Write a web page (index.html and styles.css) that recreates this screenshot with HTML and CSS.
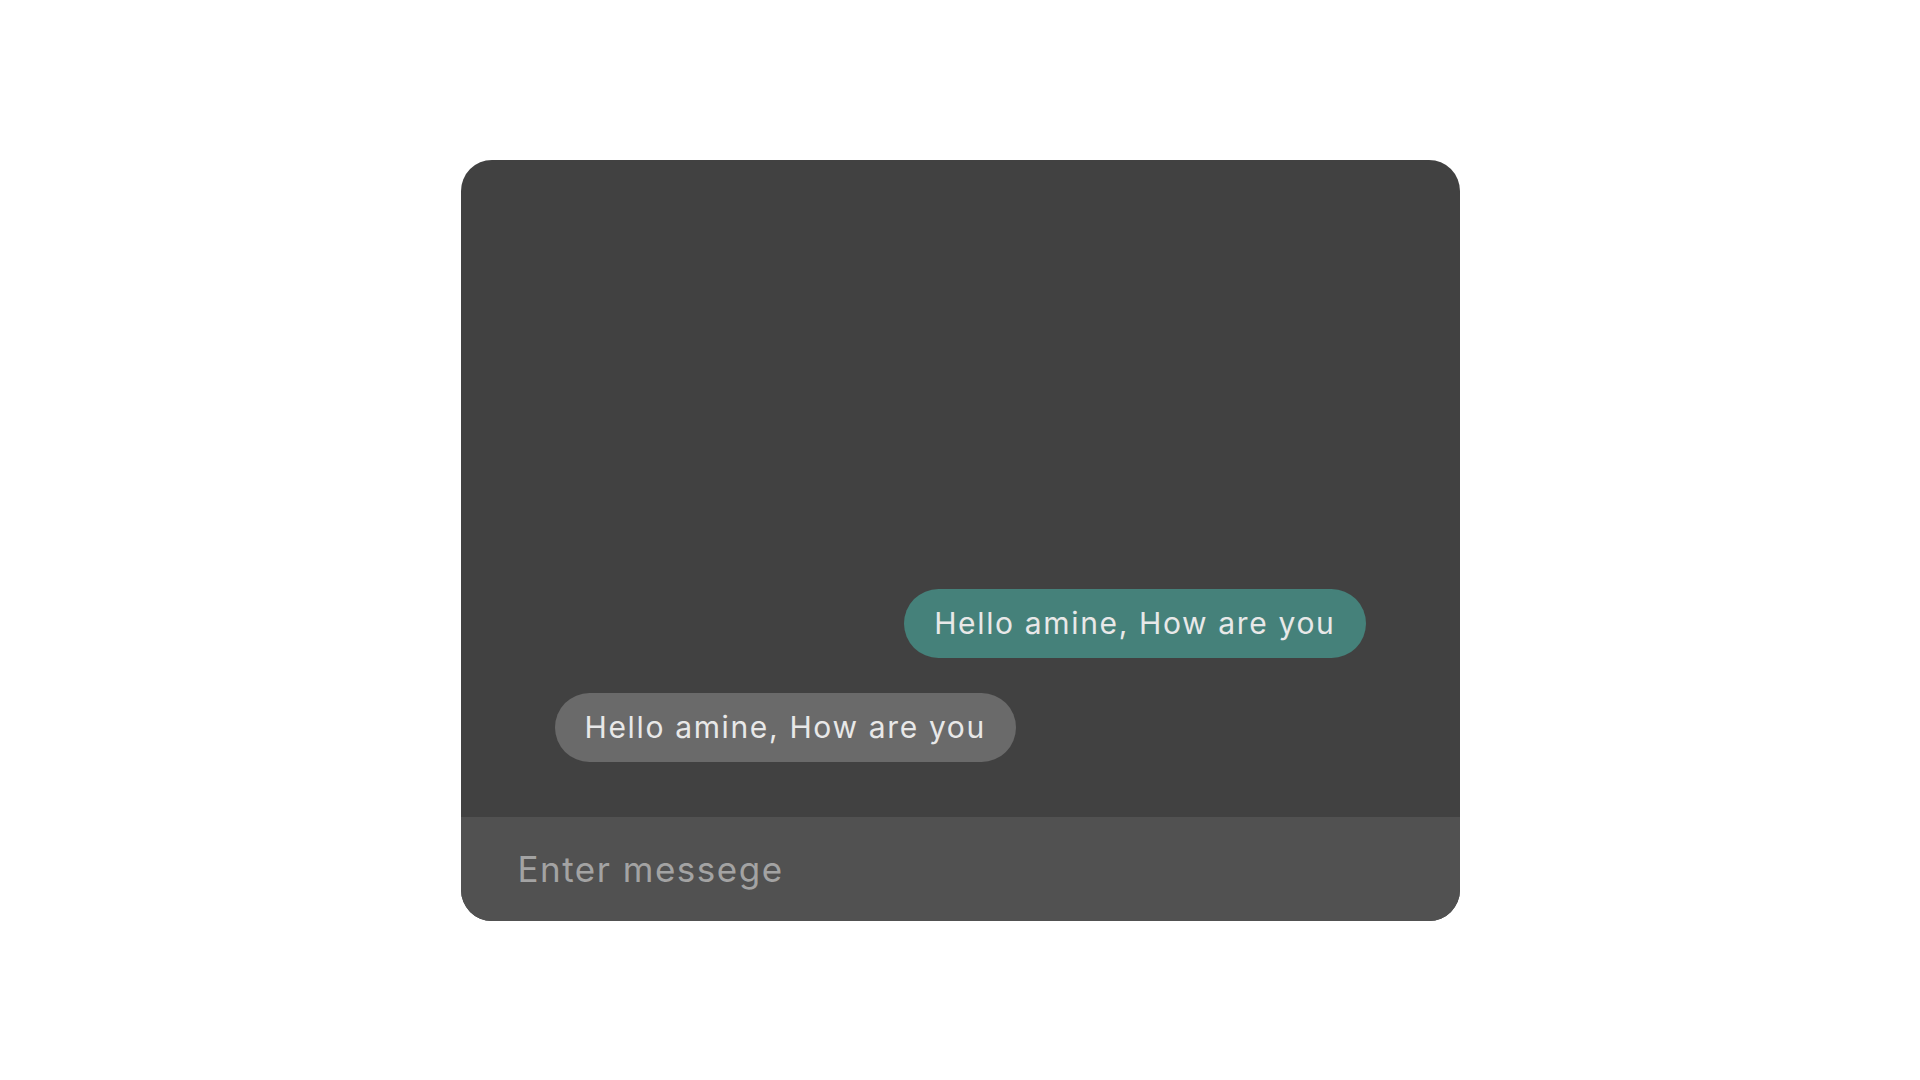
FILE: index.html
```html
<!DOCTYPE html>
<html lang="en">
<head>
<meta charset="utf-8">
<title>Chat</title>
<link rel="stylesheet" href="styles.css">
</head>
<body>
<div class="page">
  <div class="chat">
    <div class="messages">
      <div class="bubble sent">Hello amine, How are you</div>
      <div class="bubble received">Hello amine, How are you</div>
    </div>
    <div class="composer">
      <input class="input" type="text" placeholder="Enter messege">
    </div>
  </div>
</div>
</body>
</html>
```
FILE: styles.css
```css
* { box-sizing: border-box; }
html, body { margin: 0; padding: 0; background: #ffffff; }
body { font-family: "Inter", "Noto Sans", sans-serif; }
.page {
  width: 1920px;
  height: 1080px;
  display: flex;
  align-items: center;
  justify-content: center;
}
.chat {
  width: 999px;
  height: 761px;
  border-radius: 31px;
  overflow: hidden;
  background: #414141;
  display: flex;
  flex-direction: column;
}
.messages {
  flex: 1;
  display: flex;
  flex-direction: column;
  justify-content: flex-end;
  padding: 0 94px 55px 94px;
  gap: 35px;
}
.bubble {
  height: 69px;
  display: flex;
  align-items: center;
  padding: 0 30px;
  border-radius: 35px;
  font-size: 30px;
  letter-spacing: 1.65px;
  color: #e8e8e8;
  white-space: nowrap;
}
.sent { align-self: flex-end; background: #45817a; }
.received { align-self: flex-start; background: #6a6a6a; }
.composer {
  height: 104px;
  background: #515151;
  display: flex;
  align-items: center;
  padding-left: 57px;
}
.input {
  width: 100%;
  border: none;
  outline: none;
  background: transparent;
  font-family: inherit;
  font-size: 35px;
  letter-spacing: 1.5px;
  color: #e8e8e8;
  padding: 0;
}
.input::placeholder { color: #a3a3a3; }
```
